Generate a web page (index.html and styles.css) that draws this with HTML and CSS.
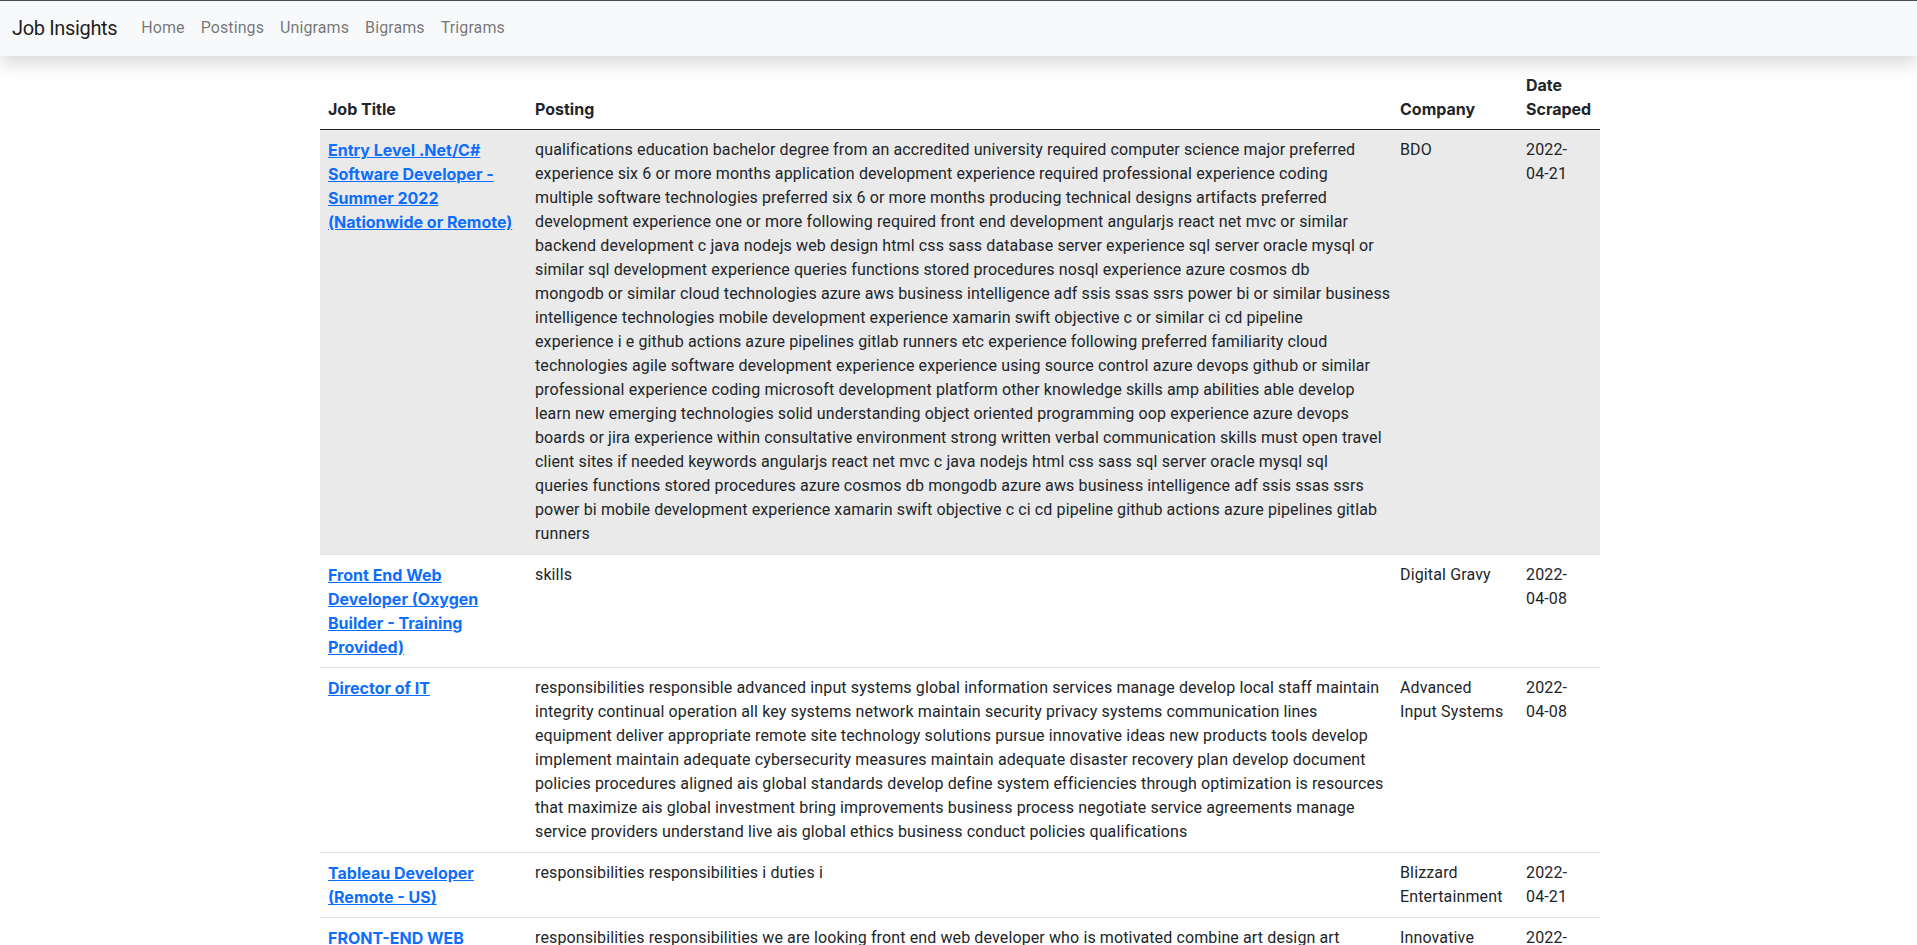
FILE: index.html
```html
<!DOCTYPE html>
<html lang="en">
<head>
<meta charset="utf-8">
<title>Job Insights</title>
<link rel="stylesheet" href="styles.css">
</head>
<body>
<nav class="navbar">
  <a class="brand" href="#">Job Insights</a>
  <ul class="nav-links">
    <li><a href="#">Home</a></li>
    <li><a href="#">Postings</a></li>
    <li><a href="#">Unigrams</a></li>
    <li><a href="#">Bigrams</a></li>
    <li><a href="#">Trigrams</a></li>
  </ul>
</nav>
<main class="container">
  <table class="jobs">
    <colgroup>
      <col class="c-title"><col class="c-posting"><col class="c-company"><col class="c-date">
    </colgroup>
    <thead>
      <tr><th>Job Title</th><th>Posting</th><th>Company</th><th>Date Scraped</th></tr>
    </thead>
    <tbody>
      <tr class="hovered">
        <td class="title"><a href="#">Entry Level .Net/C# Software Developer - Summer 2022 (Nationwide or Remote)</a></td>
        <td class="posting">qualifications education bachelor degree from an accredited university required computer science major preferred<br>
experience six 6 or more months application development experience required professional experience coding<br>
multiple software technologies preferred six 6 or more months producing technical designs artifacts preferred<br>
development experience one or more following required front end development angularjs react net mvc or similar<br>
backend development c java nodejs web design html css sass database server experience sql server oracle mysql or<br>
similar sql development experience queries functions stored procedures nosql experience azure cosmos db<br>
mongodb or similar cloud technologies azure aws business intelligence adf ssis ssas ssrs power bi or similar business<br>
intelligence technologies mobile development experience xamarin swift objective c or similar ci cd pipeline<br>
experience i e github actions azure pipelines gitlab runners etc experience following preferred familiarity cloud<br>
technologies agile software development experience experience using source control azure devops github or similar<br>
professional experience coding microsoft development platform other knowledge skills amp abilities able develop<br>
learn new emerging technologies solid understanding object oriented programming oop experience azure devops<br>
boards or jira experience within consultative environment strong written verbal communication skills must open travel<br>
client sites if needed keywords angularjs react net mvc c java nodejs html css sass sql server oracle mysql sql<br>
queries functions stored procedures azure cosmos db mongodb azure aws business intelligence adf ssis ssas ssrs<br>
power bi mobile development experience xamarin swift objective c ci cd pipeline github actions azure pipelines gitlab<br>
runners</td>
        <td>BDO</td>
        <td>2022-<span class="nw">04-21</span></td>
      </tr>
      <tr>
        <td class="title"><a href="#">Front End Web Developer (Oxygen Builder - Training Provided)</a></td>
        <td class="posting">skills</td>
        <td>Digital Gravy</td>
        <td>2022-<span class="nw">04-08</span></td>
      </tr>
      <tr>
        <td class="title"><a href="#">Director of IT</a></td>
        <td class="posting">responsibilities responsible advanced input systems global information services manage develop local staff maintain<br>
integrity continual operation all key systems network maintain security privacy systems communication lines<br>
equipment deliver appropriate remote site technology solutions pursue innovative ideas new products tools develop<br>
implement maintain adequate cybersecurity measures maintain adequate disaster recovery plan develop document<br>
policies procedures aligned ais global standards develop define system efficiencies through optimization is resources<br>
that maximize ais global investment bring improvements business process negotiate service agreements manage<br>
service providers understand live ais global ethics business conduct policies qualifications</td>
        <td>Advanced Input Systems</td>
        <td>2022-<span class="nw">04-08</span></td>
      </tr>
      <tr>
        <td class="title"><a href="#">Tableau Developer (Remote - US)</a></td>
        <td class="posting">responsibilities responsibilities i duties i</td>
        <td>Blizzard Entertainment</td>
        <td>2022-<span class="nw">04-21</span></td>
      </tr>
      <tr>
        <td class="title"><a href="#">FRONT-END WEB DEVELOPER</a></td>
        <td class="posting">responsibilities responsibilities we are looking front end web developer who is motivated combine art design art<br>
programming</td>
        <td>Innovative Systems</td>
        <td>2022-<span class="nw">04-21</span></td>
      </tr>
    </tbody>
  </table>
</main>
</body>
</html>
```
FILE: styles.css
```css
* { box-sizing: border-box; }
html, body { margin: 0; padding: 0; }
body {
  font-family: Roboto, "Liberation Sans", sans-serif;
  font-size: 16px;
  line-height: 1.5;
  color: #212529;
  background: #fff;
}
.navbar {
  display: flex;
  align-items: center;
  height: 56px;
  padding: 8px 12px;
  background: #f8f9fa;
  box-shadow: inset 0 1px 0 #4d4d4d, 0 8px 16px rgba(0,0,0,.15);
  position: relative;
  z-index: 1;
}
.brand {
  font-size: 20px;
  line-height: 30px;
  padding: 5px 0;
  margin-right: 16px;
  letter-spacing: -0.35px;
  color: rgba(0,0,0,.9);
  text-decoration: none;
}
.nav-links {
  display: flex;
  list-style: none;
  margin: 0;
  padding: 0;
}
.nav-links a {
  display: block;
  padding: 8px;
  letter-spacing: 0.1px;
  color: rgba(0,0,0,.55);
  text-decoration: none;
}
.container {
  width: 1283px;
  margin: 9px auto 0;
  padding-left: 3px;
}
.jobs {
  width: 1280px;
  table-layout: fixed;
  border-collapse: collapse;
}
.c-title { width: 207px; }
.c-posting { width: 865px; }
.c-company { width: 126px; }
.c-date { width: 82px; }
.jobs th, .jobs td {
  padding: 8px;
  text-align: left;
  vertical-align: top;
  border-bottom: 1px solid #dee2e6;
}
.jobs td { letter-spacing: 0.14px; }
.jobs td.posting { white-space: nowrap; letter-spacing: 0.12px; }
.jobs th {
  vertical-align: bottom;
  font-family: Inter, Roboto, sans-serif;
  font-weight: 700;
  border-bottom: 1px solid #212529;
}
.jobs td.title {
  font-family: Inter, Roboto, sans-serif;
  font-weight: 700;
  letter-spacing: 0;
}
.jobs td.title a {
  color: #0d6efd;
  text-decoration: underline;
}
.nw { white-space: nowrap; }
.jobs tr.hovered td { background: #eaeaea; }
```
